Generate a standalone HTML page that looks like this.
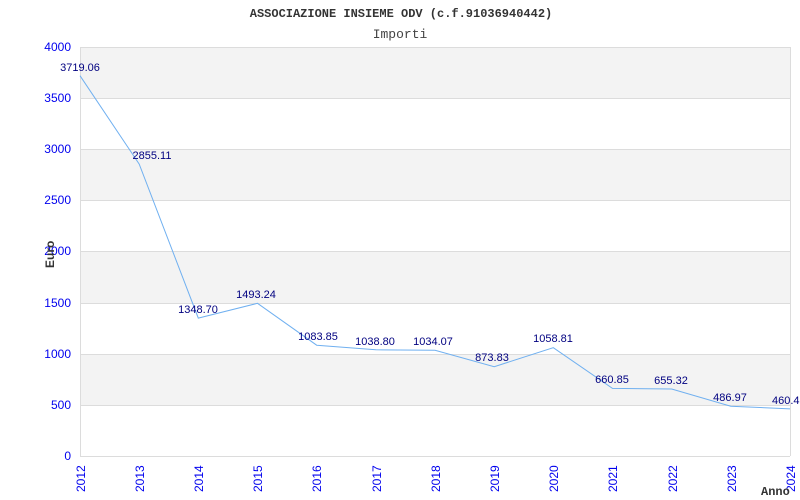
<!DOCTYPE html>
<html><head><meta charset="utf-8"><style>html,body{margin:0;padding:0;background:#fff;}svg{display:block}</style></head>
<body>
<svg width="800" height="500" xmlns="http://www.w3.org/2000/svg">
<rect width="800" height="500" fill="#fff"/>
<text x="401" y="17" text-anchor="middle" font-family="Liberation Mono, monospace" font-weight="bold" font-size="12" fill="#333">ASSOCIAZIONE INSIEME ODV (c.f.91036940442)</text>
<text x="400" y="38" text-anchor="middle" font-family="Liberation Mono, monospace" font-size="13" fill="#444">Importi</text>
<g>
<rect x="80" y="47" width="710" height="51" fill="#f3f3f3"/>
<rect x="80" y="149" width="710" height="51" fill="#f3f3f3"/>
<rect x="80" y="251" width="710" height="52" fill="#f3f3f3"/>
<rect x="80" y="354" width="710" height="51" fill="#f3f3f3"/>
</g>
<g stroke="#dcdcdc" stroke-width="1">
<line x1="80" y1="47.5" x2="790" y2="47.5"/>
<line x1="80" y1="98.5" x2="790" y2="98.5"/>
<line x1="80" y1="149.5" x2="790" y2="149.5"/>
<line x1="80" y1="200.5" x2="790" y2="200.5"/>
<line x1="80" y1="251.5" x2="790" y2="251.5"/>
<line x1="80" y1="303.5" x2="790" y2="303.5"/>
<line x1="80" y1="354.5" x2="790" y2="354.5"/>
<line x1="80" y1="405.5" x2="790" y2="405.5"/>
<line x1="80" y1="456.5" x2="790" y2="456.5"/>
<line x1="80.5" y1="47" x2="80.5" y2="456"/>
<line x1="790.5" y1="47" x2="790.5" y2="456"/>
</g>
<g font-family="Liberation Sans, sans-serif" font-size="12" fill="#0000ee" text-anchor="end">
<text x="71" y="51">4000</text>
<text x="71" y="102">3500</text>
<text x="71" y="153">3000</text>
<text x="71" y="204">2500</text>
<text x="71" y="255">2000</text>
<text x="71" y="307">1500</text>
<text x="71" y="358">1000</text>
<text x="71" y="409">500</text>
<text x="71" y="460">0</text>
</g>
<g font-family="Liberation Sans, sans-serif" font-size="12" fill="#0000ee">
<text transform="translate(85,492) rotate(-90)">2012</text>
<text transform="translate(144,492) rotate(-90)">2013</text>
<text transform="translate(203,492) rotate(-90)">2014</text>
<text transform="translate(262,492) rotate(-90)">2015</text>
<text transform="translate(321,492) rotate(-90)">2016</text>
<text transform="translate(381,492) rotate(-90)">2017</text>
<text transform="translate(440,492) rotate(-90)">2018</text>
<text transform="translate(499,492) rotate(-90)">2019</text>
<text transform="translate(558,492) rotate(-90)">2020</text>
<text transform="translate(617,492) rotate(-90)">2021</text>
<text transform="translate(677,492) rotate(-90)">2022</text>
<text transform="translate(736,492) rotate(-90)">2023</text>
<text transform="translate(795,492) rotate(-90)">2024</text>
</g>
<text transform="translate(54,268) rotate(-90)" font-family="Liberation Sans, sans-serif" font-weight="bold" font-size="12" fill="#333">Euro</text>
<text x="761" y="495" font-family="Liberation Mono, monospace" font-weight="bold" font-size="12" fill="#333">Anno</text>
<polyline fill="none" stroke="#70b0f0" stroke-width="1" points="80,75.7 139.2,164.1 198.3,318.1 257.5,303.3 316.7,345.2 375.8,349.8 435,350.3 494.2,366.7 553.3,347.7 612.5,388.4 671.7,389 730.8,406.2 790,408.9"/>
<g font-family="Liberation Sans, sans-serif" font-size="11" fill="#000080" text-anchor="middle">
<text x="80" y="71">3719.06</text>
<text x="152" y="159">2855.11</text>
<text x="198" y="313">1348.70</text>
<text x="256" y="298">1493.24</text>
<text x="318" y="340">1083.85</text>
<text x="375" y="345">1038.80</text>
<text x="433" y="345">1034.07</text>
<text x="492" y="361">873.83</text>
<text x="553" y="342">1058.81</text>
<text x="612" y="383">660.85</text>
<text x="671" y="384">655.32</text>
<text x="730" y="401">486.97</text>
<text x="772" y="404" text-anchor="start">460.4</text>
</g>
</svg>
</body></html>
